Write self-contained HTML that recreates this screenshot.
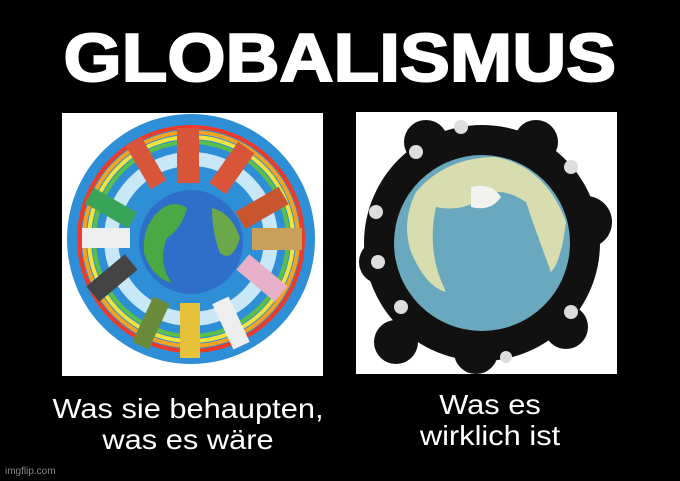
<!DOCTYPE html>
<html><head><style>
body{margin:0;width:680px;height:481px;background:#000;position:relative;overflow:hidden;font-family:"Liberation Sans",Arial,sans-serif}
.t{position:absolute;left:0;width:680px;top:20px;text-align:center;color:#fff;font-weight:900;font-size:68px;letter-spacing:0px;line-height:76px;transform:scaleX(1.1);transform-origin:342px 0;-webkit-text-stroke:2px #fff}
.cap{position:absolute;color:#fff;font-size:28px;line-height:31px;text-align:center;transform:scaleX(1.1)}
.wm{position:absolute;left:5px;bottom:4px;color:#888;font-size:10px}
</style></head><body>
<div class="t">GLOBALISMUS</div>
<svg style="position:absolute;left:62px;top:113px" width="261" height="263">
<rect width="261" height="263" fill="#fff"/>
<ellipse cx="129" cy="126" rx="124" ry="125" fill="#2f8fd6"/>
<ellipse cx="129" cy="126" rx="112" ry="112" fill="none" stroke="#ef3a2a" stroke-width="4"/>
<ellipse cx="129" cy="126" rx="107" ry="107" fill="none" stroke="#f6a321" stroke-width="4"/>
<ellipse cx="129" cy="126" rx="102" ry="102" fill="none" stroke="#f4e33b" stroke-width="4"/>
<ellipse cx="129" cy="126" rx="97" ry="97" fill="none" stroke="#5cbf46" stroke-width="4"/>
<ellipse cx="129" cy="126" rx="80" ry="80" fill="none" stroke="#c8e8f8" stroke-width="14"/>
<g fill="#d8553a"><rect x="115" y="15" width="22" height="55"/><rect x="160" y="30" width="20" height="50" transform="rotate(35 170 55)"/><rect x="75" y="25" width="18" height="50" transform="rotate(-30 84 50)"/><rect x="40" y="70" width="18" height="50" fill="#3aa35a" transform="rotate(-60 49 95)"/><rect x="190" y="70" width="20" height="50" fill="#c9552f" transform="rotate(60 200 95)"/><rect x="20" y="115" width="48" height="20" fill="#eee"/><rect x="190" y="115" width="50" height="22" fill="#c9a05a"/><rect x="40" y="140" width="20" height="50" fill="#444" transform="rotate(50 50 165)"/><rect x="190" y="140" width="20" height="50" fill="#e8b0c8" transform="rotate(-50 200 165)"/><rect x="118" y="190" width="20" height="55" fill="#e6c23a"/><rect x="80" y="185" width="18" height="50" fill="#6a8a3a" transform="rotate(25 89 210)"/><rect x="160" y="185" width="18" height="50" fill="#eee" transform="rotate(-25 169 210)"/></g>
<circle cx="129" cy="129" r="52" fill="#2d6fc9"/>
<path d="M95 100 Q110 85 125 95 Q120 115 105 125 Q95 150 110 170 Q90 165 82 140 Q80 115 95 100Z" fill="#4aa845"/>
<path d="M150 95 Q170 100 178 125 Q170 150 158 140 Q150 120 150 95Z" fill="#6aa84a"/>
</svg>
<svg style="position:absolute;left:356px;top:112px" width="261" height="262">
<rect width="261" height="262" fill="#fff"/>
<g fill="#111"><circle cx="126" cy="131" r="118"/><circle cx="70" cy="30" r="22"/><circle cx="180" cy="30" r="22"/><circle cx="230" cy="110" r="26"/><circle cx="25" cy="150" r="22"/><circle cx="40" cy="230" r="22"/><circle cx="210" cy="215" r="22"/><circle cx="120" cy="240" r="22"/></g>
<g fill="#ddd"><circle cx="105" cy="15" r="7"/><circle cx="60" cy="40" r="7"/><circle cx="20" cy="100" r="7"/><circle cx="22" cy="150" r="7"/><circle cx="45" cy="195" r="7"/><circle cx="215" cy="55" r="7"/><circle cx="215" cy="200" r="7"/><circle cx="150" cy="245" r="6"/></g>
<circle cx="126" cy="131" r="88" fill="#6aa8be"/>
<path d="M60 80 Q90 45 140 45 Q190 55 210 110 Q205 150 195 160 Q180 120 170 90 Q140 70 120 90 Q100 100 80 95 Q70 140 90 180 Q70 175 55 140 Q45 110 60 80Z" fill="#d8ddb0"/>
<path d="M115 75 Q135 70 145 85 Q135 100 115 95Z" fill="#f2f2ee"/>
</svg>
<div class="cap" style="left:28px;width:320px;top:393px">Was sie behaupten,<br>was es wäre</div>
<div class="cap" style="left:380px;width:220px;top:389px">Was es<br>wirklich ist</div>
<div class="wm">imgflip.com</div>
</body></html>
